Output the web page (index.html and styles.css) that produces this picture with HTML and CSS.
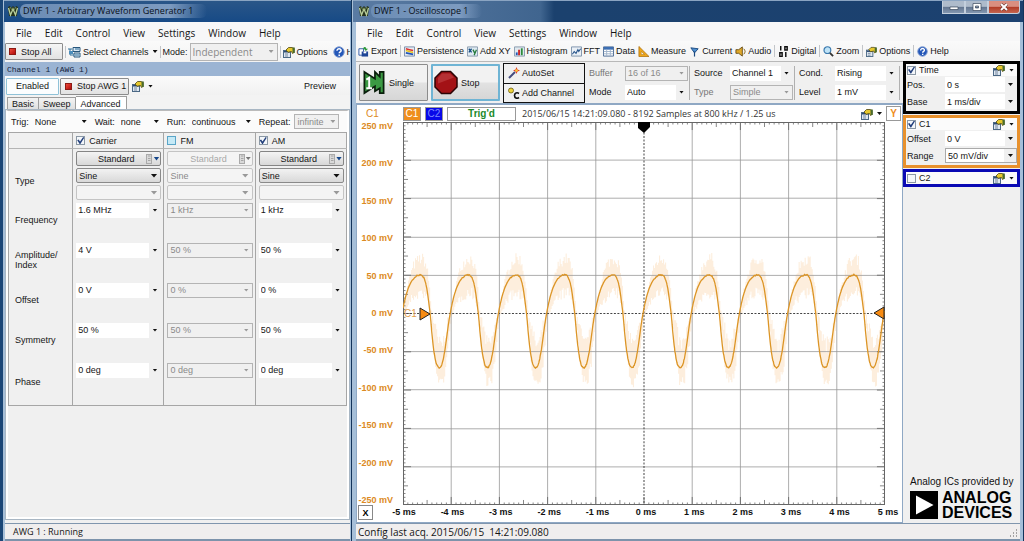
FILE: index.html
```html
<!DOCTYPE html>
<html lang="en">
<head>
<meta charset="utf-8">
<title>DWF 1</title>
<link rel="stylesheet" href="styles.css">
</head>
<body>
<svg class="defs" aria-hidden="true">
  <symbol id="i-app" viewBox="0 0 12 12"><path d="M1 2l2-1 1 2 2-2 2 2 1-2 2 1-1 9H2z" fill="#26331c"/><path d="M1.500 3l2 7 2.500-6 2.500 6 2-7" fill="none" stroke="#b9cf9a" stroke-width="1.300"/><path d="M3 2l2 3M9 2L7 5" stroke="#83a05b" stroke-width=".8"/></symbol>
  <symbol id="i-opt" viewBox="0 0 12 12"><rect x=".5" y="4.500" width="7" height="7" fill="#dfe8f2" stroke="#4b6885"/><path d="M1 5h6v1.500H1z" fill="#2d4a72"/><path d="M2 8h3M2 10h3" stroke="#5a7089" stroke-width=".8"/><path d="M3 4L5.500 1.500h3.500l2 1v4L9.500 7.500l-1-2-3.500.8z" fill="#e6c82e" stroke="#4b4410" stroke-width=".8"/><path d="M9.500 1.500h2.300v5.500H9.500z" fill="#4c6b2c"/></symbol>
  <symbol id="i-help" viewBox="0 0 12 12"><circle cx="6" cy="6" r="5.200" fill="#2457b8" stroke="#7f9bd0"/><path d="M4 4.800c0-2.800 4.200-2.500 4.100-.2C8 6 6.200 5.800 6.200 7.300M6.200 8.400v1.500" fill="none" stroke="#fff" stroke-width="1.500"/></symbol>
  <symbol id="i-calc" viewBox="0 0 8 10"><rect x="1.500" y=".5" width="5" height="9" fill="#d9d9d9" stroke="#aaa"/><path d="M3 2h2.500M3 4.500h2.500M3 6.500h2.500" stroke="#999" stroke-width=".8"/></symbol>
</svg>
<main class="desktop">

<section class="window awg">
  <header class="title"><svg class="ic"><use href="#i-app"/></svg><span>DWF 1 - Arbitrary Waveform Generator 1</span></header>
  <div class="client">
    <nav class="menu"><button>File</button><button>Edit</button><button>Control</button><button>View</button><button>Settings</button><button>Window</button><button>Help</button></nav>
    <div class="tools awg-tools">
      <button class="push stopall"><i class="red"></i>Stop All</button><i class="sep"></i>
      <button class="tool chan"><svg class="ic wide" viewBox="0 0 13 12"><path d="M5 1.500h7v4H5zM6 7h6v4H6z" fill="#d9e8f4" stroke="#27567c"/><path d="M0 3h4M2 3v6h4M7 3h4M7 9h4" fill="none" stroke="#2d6e9a"/><path d="M1 5h4v3H1z" fill="#4b8dbb"/></svg>Select Channels<i class="caret"></i></button><i class="sep"></i>
      <label for="mode">Mode:</label>
      <span class="combo off mode"><select id="mode" disabled><option>Independent</option></select></span><i class="sep"></i>
      <button class="tool"><svg class="ic"><use href="#i-opt"/></svg>Options</button>
      <button class="tool help"><svg class="ic"><use href="#i-help"/></svg>Help</button>
    </div>
    <h2 class="chan-title">Channel 1 (AWG 1)</h2>
    <div class="chan-bar">
      <button class="push enabled">Enabled</button><button class="push stopawg"><i class="red"></i>Stop AWG 1</button>
      <button class="tool" aria-label="Channel options"><svg class="ic"><use href="#i-opt"/></svg><i class="caret"></i></button>
      <button class="tool preview">Preview</button>
    </div>
    <div class="tabs"><button>Basic</button><button>Sweep</button><button class="on">Advanced</button></div>
    <div class="tab-body">
      <div class="trig">
        <label for="tr">Trig:</label><span class="combo flat t1"><select id="tr"><option>None</option></select></span>
        <label for="wt">Wait:</label><span class="combo flat t2"><select id="wt"><option>none</option></select></span>
        <label for="rn">Run:</label><span class="combo flat t3"><select id="rn"><option>continuous</option></select></span>
        <label for="rp">Repeat:</label><span class="combo off t4"><select id="rp" disabled><option>infinite</option></select></span>
      </div>
      <table class="params">
        <thead><tr><th></th>
          <th><label><input type="checkbox" checked>Carrier</label></th>
          <th><label><input type="checkbox" class="hot">FM</label></th>
          <th><label><input type="checkbox" checked>AM</label></th></tr></thead>
        <tbody>
        <tr class="type"><th scope="row">Type</th>
          <td><button class="std">Standard<svg viewBox="0 0 8 10"><use href="#i-calc"/></svg><i class="caret blue"></i></button><span class="combo drop"><select aria-label="Carrier type"><option>Sine</option></select></span><span class="combo drop off"><select aria-label="Carrier custom" disabled><option></option></select></span></td>
          <td><button class="std" disabled>Standard<svg viewBox="0 0 8 10"><use href="#i-calc"/></svg><i class="caret"></i></button><span class="combo drop off"><select aria-label="FM type" disabled><option>Sine</option></select></span><span class="combo drop off"><select aria-label="FM custom" disabled><option></option></select></span></td>
          <td><button class="std">Standard<svg viewBox="0 0 8 10"><use href="#i-calc"/></svg><i class="caret blue"></i></button><span class="combo drop"><select aria-label="AM type"><option>Sine</option></select></span><span class="combo drop off"><select aria-label="AM custom" disabled><option></option></select></span></td></tr>
        <tr><th scope="row">Frequency</th>
          <td><span class="combo"><select aria-label="Carrier frequency"><option>1.6 MHz</option></select></span></td>
          <td><span class="combo off"><select aria-label="FM frequency" disabled><option>1 kHz</option></select></span></td>
          <td><span class="combo"><select aria-label="AM frequency"><option>1 kHz</option></select></span></td></tr>
        <tr><th scope="row">Amplitude/<br>Index</th>
          <td><span class="combo"><select aria-label="Carrier amplitude"><option>4 V</option></select></span></td>
          <td><span class="combo off"><select aria-label="FM index" disabled><option>50 %</option></select></span></td>
          <td><span class="combo"><select aria-label="AM index"><option>50 %</option></select></span></td></tr>
        <tr><th scope="row">Offset</th>
          <td><span class="combo"><select aria-label="Carrier offset"><option>0 V</option></select></span></td>
          <td><span class="combo off"><select aria-label="FM offset" disabled><option>0 %</option></select></span></td>
          <td><span class="combo"><select aria-label="AM offset"><option>0 %</option></select></span></td></tr>
        <tr><th scope="row">Symmetry</th>
          <td><span class="combo"><select aria-label="Carrier symmetry"><option>50 %</option></select></span></td>
          <td><span class="combo off"><select aria-label="FM symmetry" disabled><option>50 %</option></select></span></td>
          <td><span class="combo"><select aria-label="AM symmetry"><option>50 %</option></select></span></td></tr>
        <tr class="last"><th scope="row">Phase</th>
          <td><span class="combo"><select aria-label="Carrier phase"><option>0 deg</option></select></span></td>
          <td><span class="combo off"><select aria-label="FM phase" disabled><option>0 deg</option></select></span></td>
          <td><span class="combo"><select aria-label="AM phase"><option>0 deg</option></select></span></td></tr>
        </tbody>
      </table>
    </div>
    <footer class="status">AWG 1 : Running</footer>
  </div>
</section>

<section class="window scope">
  <header class="title"><svg class="ic"><use href="#i-app"/></svg><span>DWF 1 - Oscilloscope 1</span>
    <div class="winbtns"><button aria-label="Minimize"><svg viewBox="0 0 12 8"><path d="M2 4h8v2.500H2z" fill="#fff" stroke="#39475c" stroke-width=".7"/></svg></button><button aria-label="Maximize"><svg viewBox="0 0 12 8"><path d="M2 .5h8v7H2zM4.500 3h3v2h-3z" fill="#fff" fill-rule="evenodd" stroke="#39475c" stroke-width=".7"/></svg></button><button class="close" aria-label="Close"><svg viewBox="0 0 12 8"><path d="M3 1l6 6M9 1L3 7" stroke="#5b2a24" stroke-width="3"/><path d="M3 1l6 6M9 1L3 7" stroke="#fff" stroke-width="2"/></svg></button></div>
  </header>
  <div class="client">
    <nav class="menu"><button>File</button><button>Edit</button><button>Control</button><button>View</button><button>Settings</button><button>Window</button><button>Help</button></nav>
    <div class="tools scope-tools">
      <button class="tool"><svg class="ic" viewBox="0 0 12 12"><path d="M1 3h5v7H1z" fill="#fff" stroke="#2c55a5"/><path d="M4 6h7v5.500H4z" fill="#1f4596"/><path d="M6 6h3v2H6z" fill="#fff"/><path d="M5 3c2-3 4-2 4 0h2L8.500 5.500 6.500 3z" fill="#2d9a3a"/></svg>Export</button><i class="sep"></i>
      <button class="tool"><svg class="ic" viewBox="0 0 12 12"><path d="M.5 1h11v10H.5z" fill="#e8eef5" stroke="#7488a5"/><path d="M2 3l4 1 4 1" fill="none" stroke="#d33" stroke-width="1.600"/><path d="M2 5l4 1 4 1" fill="none" stroke="#e6c21e" stroke-width="1.600"/><path d="M2 7.500l4 .8 4 .8" fill="none" stroke="#2457b8" stroke-width="1.800"/></svg>Persistence</button>
      <button class="tool"><svg class="ic" viewBox="0 0 12 12"><path d="M.5 1h11v10H.5z" fill="#dfeaf3" stroke="#8497ab"/><path d="M2 3l3 4M5 3L2 7" stroke="#174d84" stroke-width="1.400"/><path d="M6.500 4l1.800 3.500M10.300 4L7.800 10" stroke="#257a3a" stroke-width="1.400"/></svg>Add XY</button>
      <button class="tool"><svg class="ic" viewBox="0 0 12 12"><path d="M.5 1h11v10H.5z" fill="#dfe9ef" stroke="#8497ab"/><path d="M2 7h2v3H2z" fill="#2457b8"/><path d="M4.500 4h2v6h-2z" fill="#c22"/><path d="M7.500 2.500h2V10h-2z" fill="#2a8a3a"/></svg>Histogram</button>
      <button class="tool"><svg class="ic" viewBox="0 0 12 12"><path d="M.5 1h11v10H.5z" fill="#eaf0f6" stroke="#7a8fa8"/><path d="M1.500 9l2-3 2 2 2-4 1 2 2-3" fill="none" stroke="#29568c" stroke-width="1.200"/></svg>FFT</button>
      <button class="tool"><svg class="ic" viewBox="0 0 12 12"><path d="M.5 1h11v10H.5z" fill="#fff" stroke="#45658f"/><path d="M1 1h10v3H1z" fill="#3c6fb4"/><path d="M1 6h10M1 8.500h10M4 4v7M8 4v7" stroke="#9fb2c9"/></svg>Data</button>
      <button class="tool"><svg class="ic" viewBox="0 0 12 12"><path d="M1 .5v11h11z" fill="#f0a818" stroke="#a86a08" stroke-width=".8"/><path d="M3.500 6v3.200H7z" fill="#fff" stroke="#a86a08" stroke-width=".6"/></svg>Measure</button>
      <button class="tool"><svg class="ic" viewBox="0 0 12 12"><path d="M2 2l8 1-4 4.500z" fill="#4f8fd0" stroke="#1c4a80"/><path d="M6 6v5.500" stroke="#1c4a80" stroke-width="1.300"/></svg>Current</button>
      <button class="tool"><svg class="ic" viewBox="0 0 12 12"><path d="M1 4h3l4-3v10L4 8H1z" fill="#e0a92a" stroke="#5d430b" stroke-width=".9"/><path d="M9.500 3c2 2 2 4 0 6" fill="none" stroke="#806010"/></svg>Audio</button><i class="sep"></i>
      <button class="tool"><svg class="ic" viewBox="0 0 12 12"><path d="M3 0v5M7.500 .8h2.500v3.500H7.500zM2 7.300h2.500v4H2zM8.500 6.500v5.500" fill="none" stroke="#111" stroke-width="1.600"/></svg>Digital</button><i class="sep"></i>
      <button class="tool"><svg class="ic" viewBox="0 0 12 12"><circle cx="4.800" cy="4.500" r="3.700" fill="#bfe3f7" stroke="#3a79ae" stroke-width="1.300"/><path d="M7.500 7.500l3.500 3.500" stroke="#333" stroke-width="2"/></svg>Zoom</button><i class="sep"></i>
      <button class="tool"><svg class="ic"><use href="#i-opt"/></svg>Options</button><i class="sep"></i>
      <button class="tool"><svg class="ic"><use href="#i-help"/></svg>Help</button>
    </div>
    <div class="work">
      <div class="left">
        <div class="acq">
          <button class="push big"><svg viewBox="0 0 24 26"><path d="M2 2l11 7V2h0l5 5V2h4v22h-4v-5l-5 3v-5L2 24z" fill="#3b9a43" stroke="#0a1f0c" stroke-width="1.800"/><path d="M4 10l3-2v11M4 19h6" fill="none" stroke="#fff" stroke-width="2"/></svg>Single</button>
          <button class="push big focus"><svg viewBox="0 0 24 24"><path d="M7.500 1h9L23 7.500v9L16.500 23h-9L1 16.500v-9z" fill="#a31216" stroke="#2b0405" stroke-width="1.500"/><path d="M8 3h8l4 4-16 6V7.500z" fill="#c14548" opacity=".6"/></svg>Stop</button>
          <div class="pair">
            <button><svg class="ic" viewBox="0 0 12 12"><path d="M1 11l6-6" stroke="#444c80" stroke-width="2"/><path d="M8.500 0l1 2.500L12 3.500 9.500 4.500l-1 2.500-1-2.500L5 3.500l2.500-1z" fill="#e03a28"/><circle cx="8.500" cy="3.500" r="1.300" fill="#f6d33a"/></svg>AutoSet</button>
            <button><svg class="ic" viewBox="0 0 12 12"><circle cx="3" cy="3.500" r="2.500" fill="#eed33a" stroke="#6a5b10" stroke-width=".8"/><path d="M11 6.500C9 5 6.500 6 6.500 8.500S9 12 11 10.500" fill="none" stroke="#111" stroke-width="1.600"/></svg>Add Channel</button>
          </div>
          <div class="group"><label class="dim" for="bf">Buffer</label><span class="combo off"><select id="bf" disabled><option>16 of 16</option></select></span><label for="md">Mode</label><span class="combo"><select id="md"><option>Auto</option></select></span></div>
          <div class="group"><label for="sr">Source</label><span class="combo"><select id="sr"><option>Channel 1</option></select></span><label class="dim" for="ty">Type</label><span class="combo off"><select id="ty" disabled><option>Simple</option></select></span></div>
          <div class="group"><label for="cd">Cond.</label><span class="combo"><select id="cd"><option>Rising</option></select></span><label for="lv">Level</label><span class="combo"><select id="lv"><option>1 mV</option></select></span></div>
        </div>
        <div class="plot-panel">
          <div class="plot-head">
            <span class="axis-name">C1</span>
            <button class="chip c1">C1</button><button class="chip c2">C2</button>
            <span class="trigd">Trig'd</span>
            <span class="acq-info">2015/06/15 14:21:09.080 - 8192 Samples at 800 kHz / 1.25 us</span>
            <button class="tool" aria-label="Plot options"><svg class="ic"><use href="#i-opt"/></svg><i class="caret"></i></button>
            <button class="chip y">Y</button>
          </div>
          <div class="y-axis"><span>250 mV</span><span>200 mV</span><span>150 mV</span><span>100 mV</span><span>50 mV</span><span>0 mV</span><span>-50 mV</span><span>-100 mV</span><span>-150 mV</span><span>-200 mV</span><span>-250 mV</span></div>
          <div class="plot">
            <svg id="trace" class="trace" viewBox="0 0 480 382" preserveAspectRatio="none"></svg>
            <svg class="mark trigger" viewBox="0 0 12 12"><path d="M0 0h12v5l-6 6-6-5z" fill="#000"/></svg>
            <div class="mark zero"><span>C1</span><svg viewBox="0 0 12 14"><path d="M1 1l10 6-10 6z" fill="#f78b12" stroke="#222"/></svg></div>
            <svg class="mark level" viewBox="0 0 12 14"><path d="M11 1L1 7l10 6z" fill="#f78b12" stroke="#222"/></svg>
          </div>
          <button class="x-btn">X</button>
          <div class="x-axis"><span>-5 ms</span><span>-4 ms</span><span>-3 ms</span><span>-2 ms</span><span>-1 ms</span><span>0 ms</span><span>1 ms</span><span>2 ms</span><span>3 ms</span><span>4 ms</span><span>5 ms</span></div>
        </div>
      </div>
      <aside class="side">
        <div class="box time"><div class="box-head"><label><input type="checkbox" checked>Time</label><button class="tool" aria-label="Time options"><svg class="ic"><use href="#i-opt"/></svg><i class="caret"></i></button></div>
          <div class="box-grid"><label for="ps">Pos.</label><span class="combo"><select id="ps"><option>0 s</option></select></span><label for="bs">Base</label><span class="combo"><select id="bs"><option>1 ms/div</option></select></span></div></div>
        <div class="box one"><div class="box-head"><label><input type="checkbox" checked>C1</label><button class="tool" aria-label="C1 options"><svg class="ic"><use href="#i-opt"/></svg><i class="caret"></i></button></div>
          <div class="box-grid"><label for="of">Offset</label><span class="combo"><select id="of"><option>0 V</option></select></span><label for="rg">Range</label><span class="combo lined"><select id="rg"><option>50 mV/div</option></select></span></div></div>
        <div class="box two"><div class="box-head"><label><input type="checkbox">C2</label><button class="tool" aria-label="C2 options"><svg class="ic"><use href="#i-opt"/></svg><i class="caret"></i></button></div></div>
        <div class="brand"><p>Analog ICs provided by</p><div><svg viewBox="0 0 28 28"><path d="M0 0h28v28H0z"/><path d="M6 4.500L23.500 14 6 23.500z" fill="#fff"/></svg><strong>ANALOG<br>DEVICES</strong></div></div>
      </aside>
    </div>
    <footer class="status">Config last acq. 2015/06/15&nbsp; 14:21:09.080<svg viewBox="0 0 10 10"><path d="M8 1h1M5 4h1M8 4h1M2 7h1M5 7h1M8 7h1" stroke="#8a8a8a" stroke-width="1.500"/></svg></footer>
  </div>
</section>
</main>
<script src="script.js"></script>
</body>
</html>
```
FILE: styles.css
```css
* { box-sizing: border-box; }
body { margin: 0; background: #1b4676; color: #151515; font: 9px/12px "Liberation Sans", Arial, sans-serif; }
button, select, input { font: inherit; color: inherit; margin: 0; }
button { padding: 0; border: 0; background: none; white-space: nowrap; }
.defs { position: absolute; width: 0; height: 0; }
.desktop { display: grid; grid-template-columns: 352fr 672fr; height: 100vh; overflow: hidden; }
.window { display: flex; flex-direction: column; min-width: 0; border-left: 1px solid #a9bfd6; border-right: 1px solid #12335a; background: #a5bfd9; overflow: hidden; }
.awg { padding: 0 1px; margin-left: 3px; }
.scope { padding: 0 3px; }
.title { display: flex; align-items: center; gap: 4px; height: 22px; flex: none; font: 9px/14px "Open Sans", sans-serif; color: #0a1018; background: linear-gradient(#2a5688, #174a86); margin: 0 -3px; padding: 0 3px 2px 5px; border-top: 1px solid #8aa4c2; white-space: nowrap; }
.title span { background: linear-gradient(90deg, #6c8db5, #7d9bc0 80%, transparent); border-radius: 6px; padding: 0 14px 0 3px; margin-left: -3px; flex: none; }
.awg .title { margin-left: -1px; padding-left: 3px; }
.scope .title { background: linear-gradient(90deg, #5a7ba3, #40658f 28%, #1b416e 30%, #1c4170); }
.winbtns { display: flex; margin-left: auto; align-self: flex-start; }
.winbtns button { width: 23px; height: 13px; background: linear-gradient(#aebbcb 45%, #62758f 50%, #8397b0); border: 1px solid #c3cfdd; border-top: 0; display: grid; place-items: center; }
.winbtns .close { width: 32px; background: linear-gradient(#d98f80 45%, #b03b26 50%, #c4654f); border-radius: 0 0 3px 0; }
.winbtns svg { width: 12px; height: 8px; }
.client { flex: 1; display: flex; flex-direction: column; min-height: 0; background: #f0f0f0; }
.menu { display: flex; gap: 13px; padding: 3px 11px 0; height: 19px; flex: none; font: 10px/14px "Open Sans", sans-serif; background: #f7f7f8; }
.tools { display: flex; align-items: center; height: 20px; flex: none; background: linear-gradient(#fafafa, #f3f3f3); white-space: nowrap; overflow: hidden; }
.tool { display: flex; align-items: center; gap: 2px; flex: none; }
.ic { width: 12px; height: 12px; flex: none; }
.ic.wide { width: 13px; }
.sep { width: 1px; height: 12px; background: #c2c5c9; flex: none; }
.caret { width: 5px; height: 3px; background: #111; clip-path: polygon(0 0, 100% 0, 50% 100%); flex: none; margin-left: 2px; }
.caret.blue { background: #15468a; width: 6px; height: 4px; }
.awg-tools { gap: 2px; height: 21px; }
.awg-tools .help { margin-left: 3px; }
.chan .caret { margin-left: 2px; }
.push { display: flex; align-items: center; gap: 5px; background: linear-gradient(#f6f6f6, #e2e2e2); border: 1px solid #8c8c8c; border-radius: 1px; }
.red { width: 7px; height: 7px; flex: none; background: linear-gradient(135deg, #ee4a3a, #b00c0c); border: 1px solid #8c1a14; }
.stopall { width: 58px; height: 17px; padding-left: 3px; flex: none; }
.combo { display: grid; align-items: center; height: 15px; min-width: 0; }
.combo::after { content: ""; grid-area: 1 / 1; justify-self: end; width: 5px; height: 3px; margin-right: 4px; background: #111; clip-path: polygon(0 0, 100% 0, 50% 100%); pointer-events: none; }
.combo select { grid-area: 1 / 1; appearance: none; width: 100%; height: 100%; min-width: 0; padding: 0 13px 0 2px; border: 0; border-radius: 0; background: linear-gradient(#f0f0f0, #f0f0f0) right / 12px 100% no-repeat #fff; opacity: 1; }
.combo.off select { background: #f0f0f0; border: 1px solid #b4b4b4; color: #8a8a8a; }
.combo.off::after { background: #999; }
.combo.flat select { background: transparent; }
.combo.drop select { border: 1px solid #8a8a8a; border-radius: 2px; background: linear-gradient(#f2f2f2, #d9d9d9); }
.combo.drop::after { width: 7px; height: 4px; }
.combo.drop.off select { background: #f4f4f4; border-color: #c4c4c4; }
.combo.lined select { border: 1px solid #aaa; }
.mode { width: 88px; height: 18px; font: 10px/12px "Open Sans", sans-serif; flex: none; }
.chan-title { margin: 0; height: 14px; padding: 1px 2px; background: #9bb4d3; color: #14233c; font: 8px/13px "Liberation Mono", monospace; flex: none; }
.chan-bar { display: flex; align-items: center; height: 19px; flex: none; gap: 3px; padding: 1px 1px 0; background: linear-gradient(#fbfbfb, #f1f1f1); }
.enabled { width: 53px; height: 17px; justify-content: center; background: #fbfdfe; border-color: #8fc2d8; }
.stopawg { width: 69px; height: 17px; padding-left: 4px; margin-left: -2px; }
.preview { margin: 0 13px 0 auto; }
.tabs { display: flex; align-items: flex-end; height: 15px; padding-left: 2px; flex: none; background: #f3f3f3; }
.tabs button { height: 13px; padding: 0 4px; border: 1px solid #9d9d9d; border-bottom: 0; background: linear-gradient(#f3f3f3, #dedede); line-height: 12px; }
.tabs button + button { border-left: 0; }
.tabs .on { height: 15px; padding: 0 5px; background: #fff; margin-bottom: -1px; }
.tab-body { flex: 1; min-height: 0; margin: 0 1px 4px; border: 2px solid #fff; border-top: 1px solid #bbb; outline: 1px solid #a8b6c3; }
.trig { display: flex; align-items: center; gap: 4px; height: 21px; background: #fbfbfb; padding-left: 3px; white-space: nowrap; }
.t1 { width: 58px; } .t2 { width: 44px; } .t3 { width: 65px; } .t4 { width: 45px; }
.params { width: 100%; table-layout: fixed; border-collapse: collapse; border: 1px solid #a6a6a6; }
.params th:first-child { width: 19%; }
.params th { font-weight: normal; text-align: left; padding: 0 2px 3px 6px; border-right: 1px solid #a6a6a6; line-height: 10px; }
.params thead th { height: 16px; padding: 0 3px; border-bottom: 1px solid #b4b4b4; }
.params thead label { display: flex; align-items: center; gap: 4px; }
.params tbody tr { height: 40px; }
.params .type { height: 53px; }
.params .last { height: 44px; }
.params .type th { padding-top: 14px; }
.params td { vertical-align: top; padding: 1px 2px 0 3px; border-right: 1px solid #a6a6a6; }
.type td { padding-top: 2px; }
.type .combo { margin-top: 2px; }
.std { display: flex; align-items: center; justify-content: flex-end; width: 100%; height: 15px; padding-right: 1px; background: linear-gradient(#f4f4f4, #d8d8d8); border: 1px solid #858585; border-radius: 2px; }
.std svg { width: 8px; height: 10px; margin-left: 11px; }
.std .caret { margin: 0; }
.std:disabled { color: #a8a8a8; background: #f4f4f4; border-color: #c4c4c4; }
.std:disabled .caret { background: #777; }
input[type=checkbox] { appearance: none; width: 9px; height: 9px; border: 1px solid #8b98a5; background: #f4f7fa; display: grid; place-items: center; flex: none; }
input[type=checkbox]:checked::after { content: ""; width: 7px; height: 7px; background: #24407c; clip-path: polygon(0 45%, 20% 35%, 40% 65%, 85% 0, 100% 10%, 45% 100%, 35% 100%); }
input.hot { background: #c5e9f6; border-color: #5aa5c8; }
.status { display: flex; align-items: center; height: 18px; flex: none; padding: 0 2px; background: #f0eeee; border-top: 1px solid #8096ae; border-bottom: 2px solid #7d93ab; font: 9px/14px "Open Sans", sans-serif; white-space: nowrap; }
.scope .status { font-size: 10px; }
.awg .status { padding-left: 8px; }
.status svg { width: 10px; height: 10px; margin-left: auto; align-self: flex-end; }
.scope-tools { gap: 3px; padding-left: 2px; }
.scope-tools .ic { width: 11px; height: 11px; }
.work { flex: 1; min-height: 0; display: grid; grid-template-columns: 547fr 117fr; }
.left { display: flex; flex-direction: column; min-width: 0; border-top: 1px solid #b8b8b8; }
.acq { display: flex; align-items: center; height: 41px; flex: none; gap: 3px; padding: 0 3px 0 3px; background: #f0f0f0; }
.push.big { width: 69px; height: 37px; flex: none; padding-left: 2px; gap: 3px; background: linear-gradient(#f2f2f2 48%, #e2e2e2 52%, #d6d6d6); }
.push.focus { border: 2px solid #6fb4d4; padding-left: 1px; }
.big svg { width: 24px; height: 25px; }
.pair { width: 82px; flex: none; display: grid; grid-template-rows: 19px 19px; border: 1px solid #111; }
.pair button { display: flex; align-items: center; gap: 2px; padding-left: 4px; }
.pair button + button { border-top: 1px solid #111; }
.group { flex: 1; display: grid; grid-template-columns: 34px 1fr; gap: 4px 2px; align-items: center; border-right: 1px solid #b0b0b0; padding: 0 1px; }
.dim { color: #777; }
.plot-panel { flex: 1; min-height: 0; display: grid; grid-template-columns: 46fr 482fr 17fr; grid-template-rows: 17px 1fr 17px; background: #fff; border: 1px solid #8fa8c4; border-top-width: 2px; }
.plot-head { grid-column: 1 / -1; display: flex; align-items: center; gap: 4px; padding-right: 1px; white-space: nowrap; }
.axis-name { width: 42px; padding-left: 9px; color: #dc8a24; font: 10px/12px "Liberation Sans", sans-serif; flex: none; }
.chip { width: 18px; height: 14px; border: 1px solid #999; font: 10px/12px "Liberation Sans", sans-serif; flex: none; color: #fff; background: #ef8e1d; }
.chip.c2 { background: #0808e8; color: #7d86ff; }
.chip.y { width: 15px; height: 15px; background: #fff; color: #ef8e1d; font-weight: bold; margin-left: 0; }
.trigd { width: 69px; height: 14px; border: 1px solid #999; color: #1b8a2a; font: bold 10px/12px "Liberation Sans", sans-serif; text-align: center; flex: none; }
.acq-info { flex: 1; color: #333; font: 9px/12px "Open Sans", sans-serif; padding-left: 2px; }
.y-axis { display: flex; flex-direction: column; justify-content: space-between; align-items: flex-end; padding-right: 10px; color: #dc8a24; font: bold 9px/9px "Liberation Sans", sans-serif; white-space: nowrap; }
.plot { position: relative; grid-column: 2; }
.trace { position: absolute; inset: 0; width: 100%; height: 100%; }
.mark { position: absolute; }
.trigger { width: 12px; height: 12px; top: 0; left: calc(50% - 6px); }
.zero { left: 1px; top: calc(50% - 7px); display: flex; align-items: center; gap: 2px; color: #e3a050; font: 10px/14px "Liberation Sans", sans-serif; }
.zero svg, .level { width: 12px; height: 14px; }
.level { right: 0; top: calc(50% - 8px); }
.x-btn { grid-column: 1; width: 15px; height: 15px; margin-left: 1px; border: 1px solid #888; font: bold 9px/12px "Liberation Sans", sans-serif; color: #000; }
.x-axis { grid-column: 2 / -1; display: flex; justify-content: space-between; margin: 1px 1px 0 -12px; color: #111; font: bold 9px/12px "Liberation Sans", sans-serif; white-space: nowrap; }
.x-axis span { width: 26px; text-align: center; }
.side { display: flex; flex-direction: column; min-width: 0; }
.box { border: 3px solid #000; background: #f0f0f0; margin-bottom: 1px; }
.one { border-color: #e8912d; }
.two { border-color: #0a0ab4; }
.box-head { display: flex; justify-content: space-between; align-items: center; height: 12px; padding: 0 3px 0 1px; background: #fbfbfb; }
.box-head label { display: flex; align-items: center; gap: 3px; }
.box-grid { display: grid; grid-template-columns: 36px 1fr; gap: 2px 2px; padding: 1px 0 2px 1px; align-items: center; }
.box-grid .combo { height: 15px; }
.brand { margin: auto 6px 3px 7px; color: #111; }
.brand p { margin: 0 0 2px; font: 10px/12px "Liberation Sans", sans-serif; white-space: nowrap; }
.brand div { display: flex; align-items: center; gap: 4px; }
.brand svg { width: 28px; height: 28px; flex: none; }
.brand strong { font: bold 16px/15px "Liberation Sans", sans-serif; color: #000; }
```
FILE: script.js
```js
const svg = document.getElementById("trace");
const W = 480, H = 382, DX = W / 10, DY = H / 10, MID = H / 2;

function path(d, stroke, width, dash) {
  const p = document.createElementNS("http://www.w3.org/2000/svg", "path");
  p.setAttribute("d", d);
  p.setAttribute("fill", "none");
  p.setAttribute("stroke", stroke);
  p.setAttribute("stroke-width", width);
  if (dash) p.setAttribute("stroke-dasharray", dash);
  svg.appendChild(p);
}

// One signal period: cubic segments, offsets from the zero line
const segments = [
  [0, 0, 4, -22, 9, -38, 18, -38.5],
  [18, -38.5, 24, -39, 25.5, -20, 28, 0],
  [28, 0, 30, 20, 32, 54, 37, 54],
  [37, 54, 42, 54, 44, 22, 48, 0]
];
const samples = [];
for (const s of segments) {
  for (let i = 0; i < 24; i++) {
    const t = i / 24, u = 1 - t;
    const at = k => u * u * u * s[k] + 3 * u * u * t * s[k + 2] + 3 * u * t * t * s[k + 4] + t * t * t * s[k + 6];
    samples.push([at(0), at(1)]);
  }
}
function level(x) {
  const m = ((x % DX) + DX) % DX;
  let best = samples[0];
  for (const s of samples) if (Math.abs(s[0] - m) < Math.abs(best[0] - m)) best = s;
  return best[1];
}
let seed = 7;
function rnd() { seed = (seed * 16807) % 2147483647; return seed / 2147483647; }

// Noise band
let band = "";
for (let x = 0; x < W; x++) {
  const y = level(x), k = Math.min(1, Math.abs(y) / 38);
  const up = y < 0 ? 2 + k * (8 + rnd() * 12) : 3 + k * (12 + rnd() * 16);
  const dn = y < 0 ? 4 + k * (8 + rnd() * 12) : 2 + k * (6 + rnd() * 12);
  band += `M${x + 0.5} ${MID + y - up}V${MID + y + dn}`;
}
path(band, "#fdeedd", 1.1);

// Graticule
let grid = "", ticks = "";
for (let i = 1; i < 10; i++) {
  if (i !== 5) grid += `M${i * DX} 0V${H}M0 ${Math.round(i * DY)}H${W}`;
}
for (let i = 0; i <= 100; i++) {
  const n = i % 10 === 0 ? 8 : i % 5 === 0 ? 5 : 2.5;
  const x = i * DX / 10, y = i * DY / 10;
  ticks += `M${x} 0v${n}M${x} ${H}v${-n}M0 ${y}h${n}M${W} ${y}h${-n}`;
}
path(grid, "#999", 0.8);
path(ticks, "#555", 0.7);
path(`M0.5 0.5H${W - 0.5}V${H - 0.5}H0.5Z`, "#666", 1);
path(`M${W / 2} 0V${H}M0 ${MID}H${W}`, "#444", 1, "2 1.500");

// Signal
let line = "";
for (let x = 0; x <= 10; x++) {
  for (const s of samples) {
    const px = x * DX + s[0] - 1;
    if (px < 0 || px > W) continue;
    const wobble = Math.abs(s[1]) > 34 ? (rnd() - 0.5) * 1.2 : 0;
    line += `${line ? "L" : "M"}${px.toFixed(1)} ${(MID + s[1] + wobble).toFixed(1)}`;
  }
}
path(line, "#dc9526", 1.3);
```
